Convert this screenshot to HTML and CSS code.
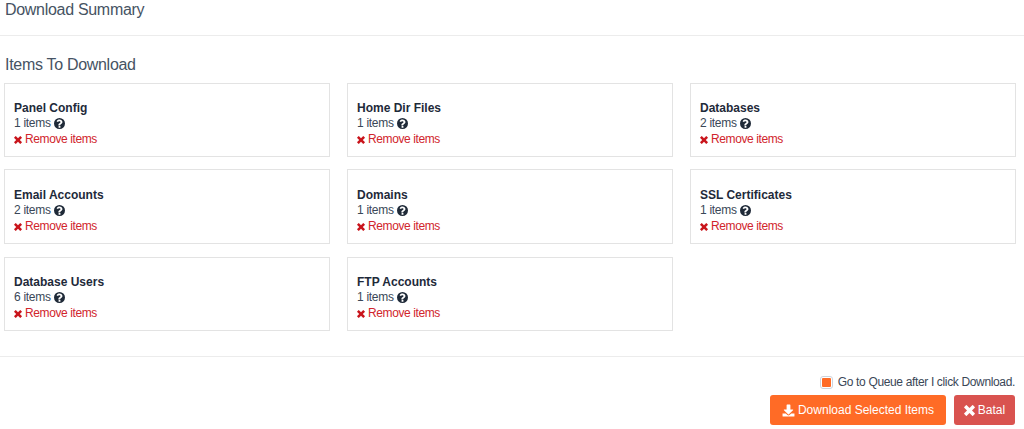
FILE: index.html
```html
<!DOCTYPE html>
<html lang="en">
<head>
<meta charset="utf-8">
<title>Download Summary</title>
<link rel="stylesheet" href="styles.css">
</head>
<body>
<svg class="defs" width="0" height="0" aria-hidden="true">
  <symbol id="i-q" viewBox="0 0 24 24"><path fill-rule="evenodd" d="M12 0a12 12 0 1 0 0 24 12 12 0 0 0 0-24zm-2 17.600h4v3.400h-4zM12.200 3.400c-3.100 0-5.200 1.300-6.600 3.500l2.700 2c.8-1.100 1.800-1.900 3.500-1.900 1.300 0 2.400.7 2.400 1.800 0 1.200-.9 1.700-2.200 2.500-1.500.9-2.500 1.900-2.500 3.800v1h4v-.6c0-1 .6-1.400 1.600-2 1.800-1.100 3.300-2.300 3.300-4.700 0-3.300-3.100-5.400-6.200-5.400z"/></symbol>
  <symbol id="i-x" viewBox="0 0 12 12"><path d="M3 .3 6 3.300 9 .3a.6.6 0 0 1 .85 0l1.850 1.850a.6.6 0 0 1 0 .85L8.700 6l3 3a.6.6 0 0 1 0 .85L9.850 11.700a.6.6 0 0 1-.85 0L6 8.700l-3 3a.6.6 0 0 1-.85 0L.3 9.850A.6.6 0 0 1 .3 9l3-3-3-3a.6.6 0 0 1 0-.85L2.150.3A.6.6 0 0 1 3 .3z"/></symbol>
  <symbol id="i-d" viewBox="0 0 24 24"><path d="M9.500 1h5a1 1 0 0 1 1 1v8h4.300c.8 0 1.200 1 .6 1.500l-7.600 7.300a1.100 1.100 0 0 1-1.600 0l-7.600-7.300c-.6-.5-.2-1.500.6-1.500h4.300V2a1 1 0 0 1 1-1z"/><path d="M1 17.500h6l3 3c1.100 1.100 2.900 1.100 4 0l3-3h6V22a1 1 0 0 1-1 1H2a1 1 0 0 1-1-1z"/></symbol>
</svg>
<header class="page-head"><h1 class="page-title">Download Summary</h1></header>
<main class="content">
  <h2 class="section-title">Items To Download</h2>
  <div class="grid">
    <article class="card"><h3 class="card-title">Panel Config</h3><p class="count">1 items <svg class="i-help"><use href="#i-q"/></svg></p><a class="remove"><svg class="i-x"><use href="#i-x"/></svg> Remove items</a></article>
    <article class="card"><h3 class="card-title">Home Dir Files</h3><p class="count">1 items <svg class="i-help"><use href="#i-q"/></svg></p><a class="remove"><svg class="i-x"><use href="#i-x"/></svg> Remove items</a></article>
    <article class="card"><h3 class="card-title">Databases</h3><p class="count">2 items <svg class="i-help"><use href="#i-q"/></svg></p><a class="remove"><svg class="i-x"><use href="#i-x"/></svg> Remove items</a></article>
    <article class="card card-tall"><h3 class="card-title">Email Accounts</h3><p class="count">2 items <svg class="i-help"><use href="#i-q"/></svg></p><a class="remove"><svg class="i-x"><use href="#i-x"/></svg> Remove items</a></article>
    <article class="card card-tall"><h3 class="card-title">Domains</h3><p class="count">1 items <svg class="i-help"><use href="#i-q"/></svg></p><a class="remove"><svg class="i-x"><use href="#i-x"/></svg> Remove items</a></article>
    <article class="card card-tall"><h3 class="card-title">SSL Certificates</h3><p class="count">1 items <svg class="i-help"><use href="#i-q"/></svg></p><a class="remove"><svg class="i-x"><use href="#i-x"/></svg> Remove items</a></article>
    <article class="card card-low"><h3 class="card-title">Database Users</h3><p class="count">6 items <svg class="i-help"><use href="#i-q"/></svg></p><a class="remove"><svg class="i-x"><use href="#i-x"/></svg> Remove items</a></article>
    <article class="card card-low"><h3 class="card-title">FTP Accounts</h3><p class="count">1 items <svg class="i-help"><use href="#i-q"/></svg></p><a class="remove"><svg class="i-x"><use href="#i-x"/></svg> Remove items</a></article>
  </div>
</main>
<footer class="foot">
  <label class="queue"><span class="check"><span class="check-fill"></span></span>Go to Queue after I click Download.</label>
  <div class="actions">
    <button class="btn btn-primary"><svg class="i-btn"><use href="#i-d"/></svg> Download Selected Items</button>
    <button class="btn btn-danger"><svg class="i-btn"><use href="#i-x"/></svg> Batal</button>
  </div>
</footer>
</body>
</html>
```
FILE: styles.css
```css
* { box-sizing: border-box; }
html, body { margin: 0; padding: 0; }
body {
  font-family: "Liberation Sans", Arial, sans-serif;
  font-size: 12px;
  line-height: 15px;
  color: #2d3b4d;
  background: #fff;
  height: 429px;
  overflow: hidden;
}
.defs { position: absolute; }
.page-head { height: 36px; border-bottom: 1px solid #ececec; padding: 0 5px; }
.page-title { margin: 0; padding-top: 1px; font-size: 16px; letter-spacing: -0.3px; line-height: 18px; font-weight: 400; color: #465363; }
.content { padding: 20px 9px 0 4px; height: 321px; border-bottom: 1px solid #ececec; }
.section-title { margin: 0 0 9px; font-size: 16px; letter-spacing: -0.3px; line-height: 18px; font-weight: 400; color: #465363; padding-left: 1px; }
.grid { display: grid; grid-template-columns: repeat(3, 326px); grid-template-rows: 74px 75px 75px; column-gap: 17px; row-gap: 12px; }
.card { border: 1px solid #e3e3e3; padding: 17px 9px 0; }
.card-tall { padding-top: 18px; }
.card-low { margin-top: 1px; }
.card-title { margin: 0; font-size: 12px; line-height: 15px; font-weight: 700; color: #1e2a3a; }
.count { margin: 0; display: flex; align-items: center; gap: 3px; letter-spacing: -0.3px; color: #3a4757; }
.remove { display: flex; align-items: center; gap: 3px; margin-top: 1px; letter-spacing: -0.4px; color: #d1252c; }
.i-help { width: 11px; height: 11px; fill: #1f2a38; }
.i-x { width: 8px; height: 8px; fill: #c9151c; }
.foot { padding: 18px 9px 0 0; display: flex; flex-direction: column; align-items: flex-end; gap: 6px; }
.queue { display: flex; align-items: center; gap: 5px; letter-spacing: -0.35px; line-height: 14px; color: #3a4757; }
.check { width: 13px; height: 13px; border: 1px solid #cdd3dc; border-radius: 3px; display: flex; align-items: center; justify-content: center; background: #fff; }
.check-fill { width: 9px; height: 9px; background: #ff6b26; border-radius: 1px; }
.actions { display: flex; gap: 8px; }
.btn { height: 30px; border: 0; border-radius: 3px; color: #fff; font: 12px/15px "Liberation Sans", Arial, sans-serif; display: flex; align-items: center; justify-content: center; gap: 3px; padding: 0; }
.btn-primary { width: 176px; background: #ff6b26; }
.btn-danger { width: 61px; background: #d9534f; }
.i-btn { width: 13px; height: 13px; fill: #fff; }
.btn-danger .i-btn { width: 11px; height: 11px; }
```
